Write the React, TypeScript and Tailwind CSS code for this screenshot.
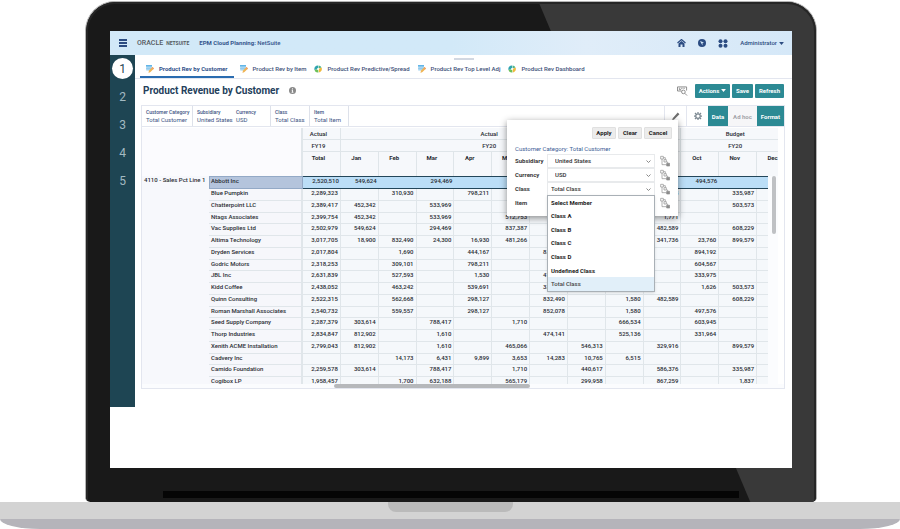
import React, { useState } from 'react';

const tabs = [
  { title: 'Product Rev by Customer', icon: 'form' },
  { title: 'Product Rev by Item', icon: 'form' },
  { title: 'Product Rev Predictive/Spread', icon: 'chart' },
  { title: 'Product Rev Top Level Adj', icon: 'form' },
  { title: 'Product Rev Dashboard', icon: 'chart' },
];

const pov = [
  { name: 'Customer Category', value: 'Total Customer', width: 'w-[51px]', line: true },
  { name: 'Subsidiary', value: 'United States', width: 'w-[39px]', line: false },
  { name: 'Currency', value: 'USD', width: 'w-[39px]', line: true },
  { name: 'Class', value: 'Total Class', width: 'w-[39px]', line: true },
  { name: 'Item', value: 'Total Item', width: 'w-[39px]', line: true },
];

const months = ['Total', 'Jan', 'Feb', 'Mar', 'Apr', 'May', 'Jun', 'Jul', 'Aug', 'Sep', 'Oct', 'Nov', 'Dec'];

const rows = [
  { name: 'Abbott Inc', values: ['2,520,510', '549,624', '', '294,469', '', '', '', '', '', '', '494,576', '', ''] },
  { name: 'Blue Pumpkin', values: ['2,289,323', '', '310,930', '', '798,211', '', '', '', '', '335,913', '', '335,987', ''] },
  { name: 'Chatterpoint LLC', values: ['2,389,417', '452,342', '', '533,969', '', '', '', '', '', '482,581', '', '503,573', ''] },
  { name: 'Ntags Associates', values: ['2,399,754', '452,342', '', '533,969', '', '512,753', '', '', '', '1,771', '', '', ''] },
  { name: 'Vac Supplies Ltd', values: ['2,502,979', '549,624', '', '294,469', '', '837,387', '', '', '', '482,589', '', '608,229', ''] },
  { name: 'Altima Technology', values: ['3,017,705', '18,900', '832,490', '24,300', '16,930', '481,266', '', '', '', '341,736', '23,760', '899,579', ''] },
  { name: 'Dryden Services', values: ['2,017,804', '', '1,690', '', '444,167', '', '832,490', '', '', '', '894,192', '', ''] },
  { name: 'Godric Motors', values: ['2,318,253', '', '309,101', '', '798,211', '', '', '', '', '', '604,567', '', ''] },
  { name: 'JBL Inc', values: ['2,631,839', '', '527,593', '', '1,530', '', '474,141', '', '', '', '333,975', '', ''] },
  { name: 'Kidd Coffee', values: ['2,438,052', '', '463,242', '', '539,691', '', '335,987', '', '', '', '1,626', '503,573', ''] },
  { name: 'Quinn Consulting', values: ['2,522,315', '', '562,668', '', '298,127', '', '832,490', '', '1,580', '482,589', '', '608,229', ''] },
  { name: 'Roman Marshall Associates', values: ['2,540,732', '', '559,557', '', '298,127', '', '852,078', '', '1,580', '', '497,576', '', ''] },
  { name: 'Seed Supply Company', values: ['2,287,379', '303,614', '', '788,417', '', '1,710', '', '', '666,534', '', '603,945', '', ''] },
  { name: 'Thorp Industries', values: ['2,834,847', '812,902', '', '1,610', '', '', '474,141', '', '525,136', '', '331,964', '', ''] },
  { name: 'Xenith ACME Installation', values: ['2,799,043', '812,902', '', '1,610', '', '465,066', '', '546,313', '', '329,916', '', '899,579', ''] },
  { name: 'Cadvery Inc', values: ['', '', '14,173', '6,431', '9,899', '3,653', '14,283', '10,765', '6,515', '', '', '', ''] },
  { name: 'Camido Foundation', values: ['2,259,578', '303,614', '', '788,417', '', '1,710', '', '440,617', '', '586,376', '', '335,987', ''] },
  { name: 'Cogibox LP', values: ['1,958,457', '', '1,700', '632,188', '', '565,179', '', '299,958', '', '867,259', '', '1,837', ''] },
];

const classOptions = ['Select Member', 'Class A', 'Class B', 'Class C', 'Class D', 'Undefined Class', 'Total Class'];

const FormIcon = () => (
  <svg viewBox="0 0 16 16" className="size-2 shrink-0">
    <path d="M0 0h12v11H0z" fill="#b5dcf3" />
    <path d="M0 0h12v3H0z" fill="#62b5e8" />
    <path d="M4 3v8M8 3v8M0 7h12" stroke="#7fc0e8" />
    <path d="M13 4l3 3-7 7-4 2 1-5z" fill="#f0b455" />
    <path d="M13 4l3 3-2 2-3-3z" fill="#f0a06a" />
  </svg>
);

const ChartIcon = () => (
  <svg viewBox="0 0 16 16" className="size-2 shrink-0">
    <path d="M8 8V1a7 7 0 0 0-7 9z" fill="#2fa4b0" />
    <path d="M8 8L1 10a7 7 0 0 0 8 5z" fill="#6cc05a" />
    <path d="M9 7V1a7 7 0 0 1 6 4z" fill="#4fb58a" />
    <path d="M9 8l6-3a7 7 0 0 1-5 10z" fill="#f0b93c" />
    <circle cx="8" cy="8" r="2" fill="#fff" />
  </svg>
);

const TreeIcon = () => (
  <svg viewBox="0 0 30 34" className="h-3 w-[10px]" fill="none" stroke="#8c8c8c" strokeWidth="2">
    <path d="M2 3h8v8H2zM12 13h7v7h-7zM6 11v17h14M10 7h6v6M19 20h4v4" />
    <path d="M20 24h9v8h-9z" fill="#8c8c8c" />
  </svg>
);

const Chevron = () => (
  <svg viewBox="0 0 10 6" className="pointer-events-none absolute top-[6px] right-1 h-[3px] w-[5px]" fill="none" stroke="#888" strokeWidth="2">
    <path d="M1 1l4 4 4-4" />
  </svg>
);

const Caret = () => (
  <svg viewBox="0 0 8 5" className="h-[3px] w-[5px]" fill="currentColor">
    <path d="M0 0h8L4 5z" />
  </svg>
);

const TopBar = () => (
  <header className="flex h-6 items-center bg-linear-to-r from-[#d2e9f8] from-50% via-[#e0edf9] via-70% to-[#d5e8f8] pr-2 pl-[9px]">
    <button aria-label="Menu" className="flex w-2 flex-col gap-px">
      <span className="h-[2px] bg-[#2c4c82]" />
      <span className="h-[2px] bg-[#2c4c82]" />
      <span className="h-[2px] bg-[#2c4c82]" />
    </button>
    <div className="ml-[10px] flex items-center gap-[3px] text-[#555a60]">
      <span className="text-[7px] leading-[8px] font-medium">ORACLE</span>
      <span className="text-[5px] leading-[8px] font-bold">NETSUITE</span>
    </div>
    <p className="ml-[10px] text-[6px] leading-[8px] font-bold text-[#34548c]">
      EPM Cloud Planning: <span className="font-medium">NetSuite</span>
    </p>
    <nav className="ml-auto flex items-center gap-3 text-[#2c4c82]">
      <button aria-label="Home">
        <svg viewBox="0 0 18 16" className="h-2 w-[9px]">
          <path d="M1 8l8-7 8 7" fill="none" stroke="currentColor" strokeWidth="2.4" />
          <path d="M3 9l6-5 6 5v7h-4v-5H7v5H3z" fill="currentColor" />
        </svg>
      </button>
      <button aria-label="Navigator">
        <svg viewBox="0 0 16 16" className="size-2">
          <circle cx="8" cy="8" r="8" fill="currentColor" />
          <path d="M4 4l8 3-3 1v5z" fill="#d5e8f8" />
        </svg>
      </button>
      <button aria-label="Applications">
        <svg viewBox="0 0 20 18" className="h-[9px] w-[10px]" fill="currentColor">
          <circle cx="5" cy="4.500" r="4" />
          <circle cx="15" cy="4.500" r="4" />
          <circle cx="5" cy="13.500" r="4" />
          <circle cx="15" cy="13.500" r="4" />
        </svg>
      </button>
      <button className="flex items-center gap-[2px] text-[6px] leading-[8px] font-medium">
        Administrator <Caret />
      </button>
    </nav>
  </header>
);

const Steps = () => (
  <aside className="flex w-[25px] shrink-0 flex-col items-center gap-[7px] bg-[#1e4553] pt-[3px] text-[12px]">
    {[1, 2, 3, 4, 5].map((step) => (
      <button
        key={step}
        className={step === 1 ? 'size-[21px] rounded-full bg-white text-[#1e4553]' : 'size-[21px] rounded-full text-[#a3bac2]'}
      >
        {step}
      </button>
    ))}
  </aside>
);

const MemberPopup = () => {
  const [member, setMember] = useState('Total Class');
  const selectStyle = 'h-[14px] w-full appearance-none border border-[#e8eaec] bg-white text-[6px] text-[#333]';

  return (
    <section className="absolute top-[14px] right-[106px] w-[171px] bg-white px-2 pt-[7px] pb-[6px] text-[6px] leading-[8px] shadow-[0_2px_7px_rgba(0,0,0,0.45)]">
      <div className="-mr-[2px] flex justify-end gap-[2px] font-bold text-[#222]">
        <button className="h-3 w-6 rounded-[1px] border border-[#e0e0e0] bg-[#ececec]">Apply</button>
        <button className="h-3 w-6 rounded-[1px] border border-[#e0e0e0] bg-[#ececec]">Clear</button>
        <button className="h-3 w-7 rounded-[1px] border border-[#e0e0e0] bg-[#ececec]">Cancel</button>
      </div>
      <p className="mt-[6px] mb-px font-normal text-[#3c5d96]">Customer Category: Total Customer</p>

      <div className="grid grid-cols-[32px_1fr_15px] items-center font-bold text-[#3a3a3a]">
        <label htmlFor="subsidiary">Subsidiary</label>
        <div className="relative font-medium">
          <select id="subsidiary" className={`${selectStyle} pl-[7px]`}>
            <option>United States</option>
          </select>
          <Chevron />
        </div>
        <button aria-label="Pick subsidiary" className="pl-[5px]"><TreeIcon /></button>

        <label htmlFor="currency">Currency</label>
        <div className="relative font-medium">
          <select id="currency" className={`${selectStyle} pl-[7px]`}>
            <option>USD</option>
          </select>
          <Chevron />
        </div>
        <button aria-label="Pick currency" className="pl-[5px]"><TreeIcon /></button>

        <label htmlFor="class">Class</label>
        <div className="relative font-medium">
          <select id="class" value={member} onChange={(e) => setMember(e.target.value)} className={`${selectStyle} pl-[3px]`}>
            {classOptions.map((option) => (
              <option key={option}>{option}</option>
            ))}
          </select>
          <Chevron />
          {/* Open member list */}
          <ul className="absolute top-[13px] left-0 z-10 grid h-[97px] w-full grid-rows-7 border border-[#a9b0b6] bg-white text-[#1d1d1d] shadow-sm">
            {classOptions.map((option) => (
              <li key={option} className="min-h-0">
                <button
                  onClick={() => setMember(option)}
                  className={
                    option === member
                      ? 'size-full bg-[#e1eff9] pl-[3px] text-left font-medium text-[#444]'
                      : 'size-full pl-[3px] text-left font-bold'
                  }
                >
                  {option}
                </button>
              </li>
            ))}
          </ul>
        </div>
        <button aria-label="Pick class" className="pl-[5px]"><TreeIcon /></button>

        <span className="leading-[14px]">Item</span>
        <span />
        <button aria-label="Pick item" className="pl-[5px]"><TreeIcon /></button>
      </div>
    </section>
  );
};

const PlanTable = () => (
  <table className="h-[261px] w-[calc(100%+17px)] table-fixed border-separate border-spacing-0 text-[6px] leading-[8px] font-medium text-[#2a2d33]">
    <colgroup>
      <col className="w-[67px]" />
      <col className="w-[94px]" />
      {months.map((month) => (
        <col key={month} />
      ))}
    </colgroup>
    <thead className="bg-[#f6f8fb]">
      <tr className="h-3">
        <td rowSpan={3} colSpan={2} className="border-r-2 border-[#e0e6ea] bg-[#fbfbfe]" />
        <th className="border-r border-b border-[#dfe5e9] pr-[6px] font-medium">Actual</th>
        <th colSpan={8} className="border-b border-[#dfe5e9] pr-[6px] font-medium">Actual</th>
        <th className="border-r border-b border-[#dfe5e9]" />
        <th colSpan={3} className="border-b border-[#dfe5e9] pr-[6px] font-medium">Budget</th>
      </tr>
      <tr className="h-3">
        <th className="border-r border-b border-[#dfe5e9] pr-[6px] font-medium">FY19</th>
        <th colSpan={8} className="border-b border-[#dfe5e9] pr-[6px] font-medium">FY20</th>
        <th className="border-r border-b border-[#dfe5e9]" />
        <th colSpan={3} className="border-b border-[#dfe5e9] pr-[6px] font-medium">FY20</th>
      </tr>
      <tr className="h-6 align-top">
        {months.map((month) => (
          <th key={month} className="border-r border-[#dfe5e9] pt-[2px] pr-[6px] font-bold">{month}</th>
        ))}
      </tr>
    </thead>
    <tbody className="bg-[#f5f8fb]">
      {rows.map((row, index) => {
        const active = index === 0;
        return (
          <tr key={row.name} className="align-top">
            {active && (
              <th rowSpan={rows.length} className="bg-[#f7f8fc] pl-[2px] text-left font-medium whitespace-nowrap">
                4110 - Sales Pct Line 1
              </th>
            )}
            <th
              className={
                active
                  ? 'border border-[#93a9c6] bg-[#b4c4dc] pl-px text-left font-medium whitespace-nowrap'
                  : 'border-r-2 border-b border-[#e0e6ea] bg-[#f6f7fb] pl-[2px] text-left font-medium whitespace-nowrap'
              }
            >
              {row.name}
            </th>
            {row.values.map((value, i) => (
              <td
                key={months[i]}
                className={
                  active
                    ? 'border-y border-[#23465a] bg-[#bbdef7] pr-[2px] text-right'
                    : 'border-r border-b border-[#e0e6ea] pr-[2px] text-right'
                }
              >
                {value}
              </td>
            ))}
          </tr>
        );
      })}
    </tbody>
  </table>
);

const Screen = () => (
  <div className="relative bg-white pb-[61px]">
    <TopBar />
    <div className="flex">
      <Steps />
      <main className="relative min-w-0 flex-1 pb-[18px]">
        <span className="absolute top-[3px] left-1/2 h-[2px] w-5 -translate-x-1/2 bg-[#d2d8e2]" />

        <nav className="flex h-6 border-b border-[#e3e6ef] pl-[5px] text-[6px] leading-[8px] text-[#3d4f78]">
          {tabs.map((tab, index) => (
            <a
              key={tab.title}
              href="#"
              className={
                index === 0
                  ? 'flex items-center gap-[5px] border-b-2 border-[#2a6cb0] pt-[6px] pr-[6px] pl-[6px] font-bold whitespace-nowrap text-[#2f4f8a]'
                  : 'flex items-center gap-[5px] pt-1 pr-[2px] pl-[6px] font-medium whitespace-nowrap'
              }
            >
              {tab.icon === 'form' ? <FormIcon /> : <ChartIcon />}
              {tab.title}
            </a>
          ))}
        </nav>

        <div className="flex h-[26px] items-center px-2 pb-[3px]">
          <h1 className="text-[10px] leading-[12px] font-bold text-[#24405c]">Product Revenue by Customer</h1>
          <svg viewBox="0 0 16 16" className="ml-[10px] size-[7px]">
            <circle cx="8" cy="8" r="8" fill="#8a8a8a" />
            <path d="M7 3h2v2H7zM6 6h3v5h1v2H6v-2h1V8H6z" fill="#fff" />
          </svg>
          <div className="ml-auto flex items-center gap-[2px] text-[6px] leading-[8px] font-bold text-white">
            <button aria-label="Find" className="mr-[5px]">
              <svg viewBox="0 0 24 22" className="h-[10px] w-[11px]" fill="none" stroke="#858585" strokeWidth="2">
                <path d="M1 2h20v8M1 2v9h9M4 5h3M9 5h3M14 5h3M4 8h5" />
                <circle cx="14" cy="13" r="4" />
                <path d="M17 16l5 5" />
              </svg>
            </button>
            <button className="flex h-[14px] w-[35px] items-center justify-center gap-[2px] rounded-[1px] bg-[#2c8a94]">
              Actions <Caret />
            </button>
            <button className="h-[14px] w-[21px] rounded-[1px] bg-[#2c8a94]">Save</button>
            <button className="h-[14px] w-[29px] rounded-[1px] bg-[#2c8a94]">Refresh</button>
          </div>
        </div>

        <section className="relative mr-[7px] ml-[6px] border border-[#e3e6ef]">
          <div className="flex h-[21px] border-b border-[#e3e6ef] leading-[7px] font-medium text-[#3d5484]">
            {pov.map((item) => (
              <div
                key={item.name}
                className={`${item.width} ${item.line ? 'border-r' : ''} border-[#dde1ea] pt-[3px] pl-1 whitespace-nowrap`}
              >
                <p className="text-[5px]">{item.name}</p>
                <p className="text-[6px] font-normal">{item.value}</p>
              </div>
            ))}
            <div className="ml-auto flex text-[6px] font-bold">
              <button aria-label="Edit" className="grid w-[22px] place-items-center border-l border-[#e3e6ef]">
                <svg viewBox="0 0 16 16" className="size-[9px]" fill="#6f6f6f">
                  <path d="M12 1l3 3-9 9-4 2 1-4zM1 15l2-1" />
                </svg>
              </button>
              <button aria-label="Settings" className="grid w-[22px] place-items-center border-l border-[#e3e6ef]">
                <svg viewBox="0 0 16 16" className="size-2" fill="none" stroke="#7b8790">
                  <circle cx="8" cy="8" r="4.500" strokeWidth="2.500" />
                  <path d="M8 0v3M8 13v3M0 8h3M13 8h3M2 2l2 2M12 12l2 2M14 2l-2 2M2 14l2-2" strokeWidth="2.500" />
                </svg>
              </button>
              <button className="w-5 bg-[#2c8a94] text-white">Data</button>
              <button className="w-[29px] bg-[#f6f6f8] text-[#a3a3a8]">Ad hoc</button>
              <button className="w-[27px] bg-[#2c8a94] text-white">Format</button>
            </div>
          </div>

          <div className="relative mt-px mr-[6px] h-[256px] overflow-hidden">
            <PlanTable />
            <div className="absolute top-12 right-0 bottom-0 w-[10px] bg-[#fbfcfe] pl-1">
              <div className="h-[58px] w-1 rounded-full bg-[#bfc1c4]" />
            </div>
          </div>
          <div className="flex h-1 bg-[#fbfcfe]">
            <div className="ml-[192px] w-[196px] rounded-full bg-[#b6b8bb]" />
          </div>

          <MemberPopup />
        </section>
      </main>
    </div>
  </div>
);

export default function App() {
  return (
    <div className="bg-white pt-px font-['Roboto','Liberation_Sans',sans-serif]">
      <div className="pr-[83px] pl-[85px]">
        {/* Lid */}
        <div className="relative overflow-hidden rounded-t-[30px] rounded-b-[5px] border border-b-0 border-[#b5b5b5] bg-[#191919] px-6 pt-[29px]">
          <div className="absolute inset-0 bg-[#393939] [clip-path:polygon(62%_0,100%_0,100%_100%,91%_100%)]" />
          <div className="absolute inset-0 rounded-t-[29px] border-2 border-b-0 border-[#262626]" />
          <Screen />
          <div className="relative h-[34px] px-[53px] pt-[23px]">
            <div className="h-[7px] bg-[#050505]" />
          </div>
        </div>
      </div>

      {/* Base */}
      <div className="flex h-[17px] justify-center bg-[#d3d3d3]">
        <div className="h-[10px] w-[125px] rounded-b-lg bg-[#bababa]" />
      </div>
      <div className="h-[10px] bg-[#b5b4ba] [border-radius:0_0_40px_40px/0_0_10px_10px]" />
    </div>
  );
}
